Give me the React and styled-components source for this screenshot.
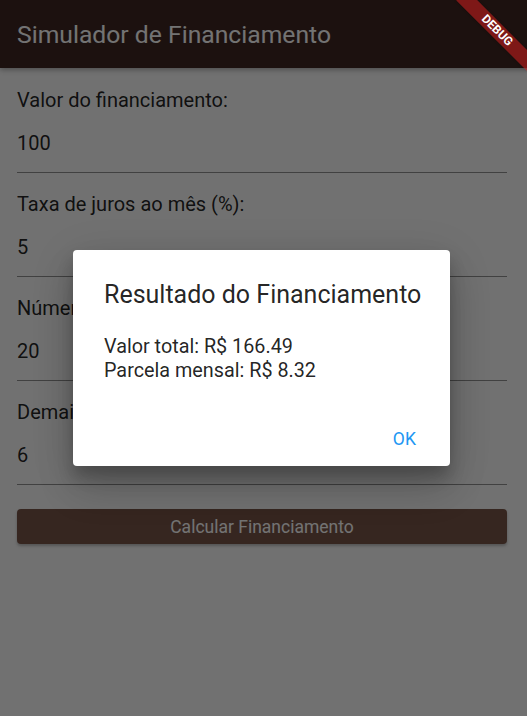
import React from "react";
import styled, { createGlobalStyle } from "styled-components";

const GlobalStyle = createGlobalStyle`
	* {
		box-sizing: border-box;
	}
	body {
		margin: 0;
		font-family: Roboto, "Noto Sans", Arial, sans-serif;
		background: #fafafa;
	}
`;

const Screen = styled.div`
	position: relative;
	width: 100%;
	min-height: 100vh;
	overflow: hidden;
	background: #fafafa;
`;

const AppBar = styled.header`
	height: 68px;
	display: flex;
	align-items: center;
	padding: 0 17px;
	background: #3e2723;
	box-shadow: 0 2px 5px rgba(0, 0, 0, 0.3);

	h1 {
		margin: 0;
		font-size: 24.7px;
		font-weight: 400;
		color: #ffffff;
	}
`;

const Form = styled.main`
	padding: 20px 20px 0 17px;
	display: flex;
	flex-direction: column;
	gap: 19px;
`;

const Field = styled.div`
	display: flex;
	flex-direction: column;
`;

const Label = styled.label`
	font-size: 20px;
	line-height: 24px;
	color: rgba(0, 0, 0, 0.87);
`;

const Input = styled.div`
	padding: 19px 0 17px;
	font-size: 20px;
	line-height: 24px;
	color: rgba(0, 0, 0, 0.87);
	border-bottom: 1.2px solid rgba(0, 0, 0, 0.42);
`;

const CalcButton = styled.button`
	margin-top: 5px;
	height: 35px;
	width: 100%;
	border: none;
	border-radius: 4px;
	background: #795548;
	color: #ffffff;
	font-family: inherit;
	font-size: 17.5px;
	font-weight: 400;
	box-shadow: 0 2px 3px rgba(0, 0, 0, 0.25);
`;

const Barrier = styled.div`
	position: absolute;
	inset: 0;
	padding-right: 4px;
	background: rgba(0, 0, 0, 0.55);
	display: flex;
	align-items: center;
	justify-content: center;
`;

const Dialog = styled.div`
	width: 377px;
	height: 216px;
	background: #ffffff;
	border-radius: 4px;
	display: flex;
	flex-direction: column;
	box-shadow: 0 11px 15px rgba(0, 0, 0, 0.2), 0 24px 38px rgba(0, 0, 0, 0.14),
		0 9px 46px rgba(0, 0, 0, 0.12);

	h2 {
		margin: 0;
		padding: 29px 28px 0 31px;
		font-size: 25px;
		line-height: 32px;
		font-weight: 400;
		color: rgba(0, 0, 0, 0.87);
		white-space: nowrap;
	}

	p {
		margin: 0;
		padding: 24px 31px 0;
		font-size: 19.8px;
		line-height: 23.5px;
		color: rgba(0, 0, 0, 0.87);
	}
`;

const Actions = styled.div`
	margin-top: auto;
	display: flex;
	justify-content: flex-end;
	padding: 0 7px 6px;
`;

const TextButton = styled.button`
	min-width: 77px;
	height: 43px;
	border: none;
	background: transparent;
	color: #2196f3;
	font-family: inherit;
	font-size: 17.5px;
	font-weight: 400;
	letter-spacing: 0.3px;
`;

const DebugBanner = styled.div`
	position: absolute;
	top: 22.5px;
	right: -20px;
	width: 100px;
	height: 15px;
	transform: rotate(45deg);
	background: rgba(183, 28, 28, 0.63);
	color: #ffffff;
	font-size: 12px;
	font-weight: 700;
	line-height: 15px;
	text-align: center;
	box-shadow: 0 0 3px rgba(0, 0, 0, 0.25);
`;

const campos = [
	{ label: "Valor do financiamento:", valor: "100" },
	{ label: "Taxa de juros ao mês (%):", valor: "5" },
	{ label: "Número de parcelas:", valor: "20" },
	{ label: "Demais encargos:", valor: "6" },
];

const App = () => {
	return (
		<Screen>
			<GlobalStyle />
			<AppBar>
				<h1>Simulador de Financiamento</h1>
			</AppBar>
			<Form>
				{campos.map((c) => (
					<Field key={c.label}>
						<Label>{c.label}</Label>
						<Input>{c.valor}</Input>
					</Field>
				))}
				<CalcButton>Calcular Financiamento</CalcButton>
			</Form>
			<Barrier>
				<Dialog>
					<h2>Resultado do Financiamento</h2>
					<p>
						Valor total: R$ 166.49
						<br />
						Parcela mensal: R$ 8.32
					</p>
					<Actions>
						<TextButton>OK</TextButton>
					</Actions>
				</Dialog>
			</Barrier>
			<DebugBanner>DEBUG</DebugBanner>
		</Screen>
	);
};

export default App;
